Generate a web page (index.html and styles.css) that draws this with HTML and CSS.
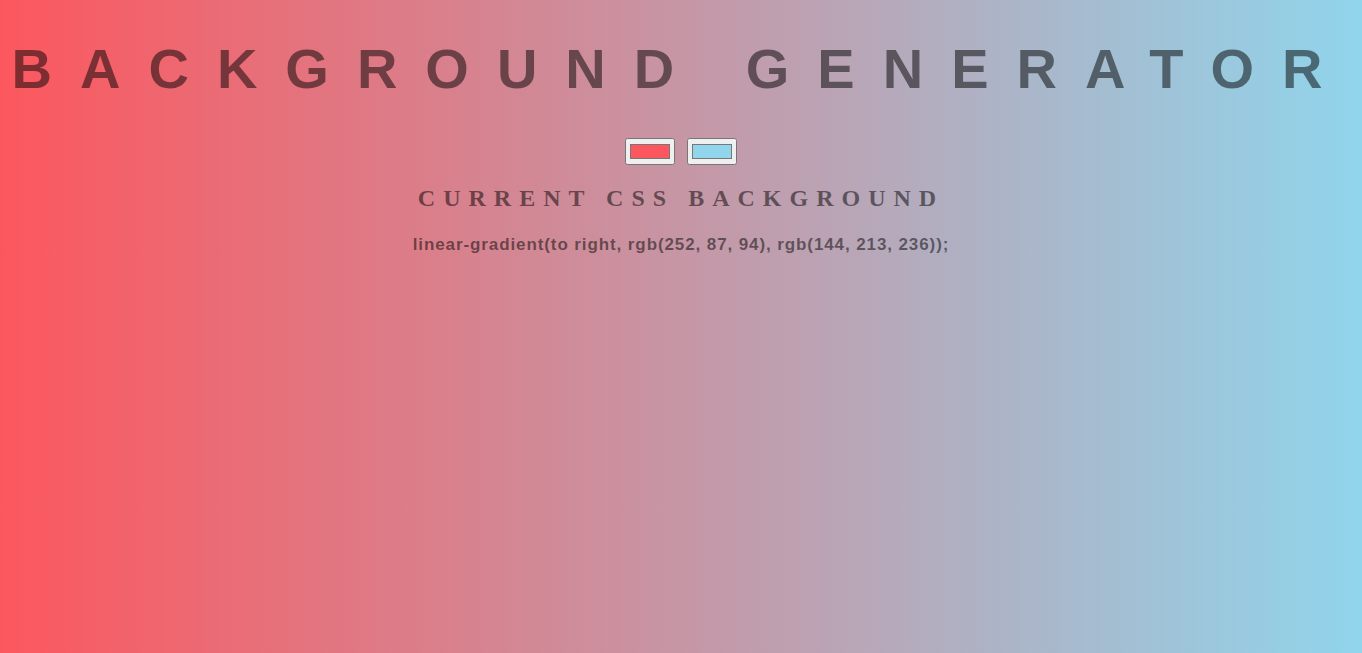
FILE: index.html
```html
<!DOCTYPE html>
<html lang="en">
<head>
<meta charset="utf-8">
<title>Background Generator</title>
<link rel="stylesheet" href="styles.css">
</head>
<body class="page">
  <h1 class="title">Background Generator</h1>
  <input class="picker color1" type="color" name="color1" value="#fc575e">
  <input class="picker color2" type="color" name="color2" value="#90d5ec">
  <h2 class="subtitle">Current CSS Background</h2>
  <h3 class="css-output">linear-gradient(to right, rgb(252, 87, 94), rgb(144, 213, 236));</h3>
</body>
</html>
```

FILE: styles.css
```css
html {
  min-height: 100%;
}

.page {
  margin: 8px;
  font-family: "Liberation Serif", "Times New Roman", serif;
  font-size: 16px;
  color: rgba(0, 0, 0, 0.5);
  text-align: center;
  letter-spacing: 8px;
  background: linear-gradient(to right, rgb(252, 87, 94), rgb(144, 213, 236));
  min-height: calc(100vh - 16px);
}

.title {
  font: 700 56px "Liberation Sans", Arial, sans-serif;
  margin: 27.5px 0 37.5px;
  letter-spacing: 28px;
  text-transform: uppercase;
  color: rgba(0, 0, 0, 0.5);
}

.picker {
  letter-spacing: normal;
}

.subtitle {
  font-family: "Liberation Serif", "Times New Roman", serif;
  font-size: 24px;
  font-weight: 700;
  margin: 20px 0;
  text-transform: uppercase;
  letter-spacing: 8px;
}

.css-output {
  font: 900 17px "Liberation Sans", Arial, sans-serif;
  letter-spacing: 0.9px;
  margin: 23px 0 18.7px;
}
```
